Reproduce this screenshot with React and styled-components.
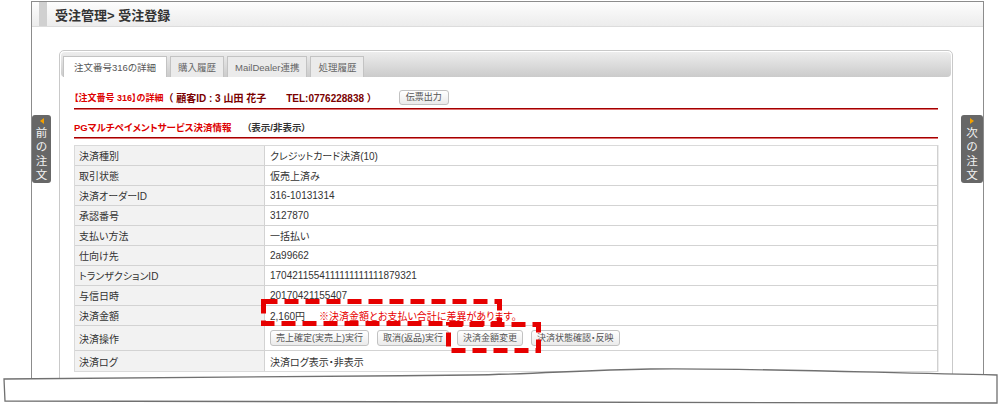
import React from 'react';
import styled, { createGlobalStyle } from 'styled-components';

const GlobalStyle = createGlobalStyle`
  html, body {
    margin: 0;
    padding: 0;
    background: #fff;
  }
  body {
    font-family: "Liberation Sans", "Noto Sans CJK JP", "Noto Sans", sans-serif;
    font-feature-settings: "palt";
    color: #333;
  }
`;

const Page = styled.div`
  position: relative;
  width: 1000px;
  height: 405px;
  overflow: hidden;
  padding: 1px 0 0 31px;
  box-sizing: border-box;
`;

const Frame = styled.div`
  width: 953px;
  height: 420px;
  border: 1px solid #8c8c8c;
  border-bottom: none;
  box-sizing: border-box;
`;

const TitleBar = styled.div`
  display: flex;
  align-items: center;
  height: 24px;
  border-bottom: 1px solid #dcdcdc;
  background: linear-gradient(#fdfdfd, #ececec);
`;

const Accent = styled.span`
  align-self: stretch;
  width: 8px;
  margin-left: 7px;
  background: #d0d0d0;
`;

const Title = styled.h1`
  margin: 0 0 0 8px;
  font-size: 13px;
  font-weight: bold;
  color: #333;
  font-feature-settings: normal;
`;

const Body = styled.div`
  display: flex;
  align-items: flex-start;
  padding-top: 23px;
`;

const SideTab = styled.div`
  width: ${(p) => (p.$side === 'left' ? '19px' : '22px')};
  height: 68px;
  margin-top: 65px;
  box-sizing: border-box;
  padding-top: 3px;
  background: #676767;
  border-radius: 3px;
  color: #f2f2f2;
  display: flex;
  flex-direction: column;
  align-items: center;
  font-family: "Noto Sans CJK JP", sans-serif;
  font-feature-settings: normal;
  font-size: 11.5px;
  line-height: 14px;
`;

const Arrow = styled.span`
  width: 0;
  height: 0;
  margin-bottom: 1px;
  border-top: 3px solid transparent;
  border-bottom: 3px solid transparent;
  ${(p) =>
    p.$side === 'left'
      ? 'border-right: 4px solid #f3a000;'
      : 'border-left: 4px solid #f3a000;'}
`;

const Char = styled.span`
  display: block;
  height: 14px;
`;

const Panel = styled.div`
  width: 894px;
  height: 340px;
  margin: 0 8px;
  box-sizing: border-box;
  border: 1px solid #c9c9c9;
  border-radius: 5px;
  padding: 1px;
`;

const TabBar = styled.div`
  display: flex;
  align-items: flex-end;
  gap: 3px;
  height: 25px;
  padding-left: 2px;
  background: linear-gradient(#ededed, #cbcbcb);
  border-radius: 4px;
`;

const Tab = styled.div`
  height: 21px;
  box-sizing: border-box;
  padding: 0 ${(p) => (p.$active ? 10 : 7)}px;
  display: flex;
  align-items: center;
  border: 1px solid #c3c3c3;
  border-bottom: none;
  background: ${(p) => (p.$active ? '#fff' : '#ebebeb')};
  color: ${(p) => (p.$active ? '#555' : '#666')};
  font-size: 9.5px;
  white-space: nowrap;
`;

const Content = styled.div`
  padding: 0 13px;
`;

const RuleRow = styled.div`
  display: flex;
  align-items: center;
  height: ${(p) => p.$h}px;
  margin-top: ${(p) => p.$mt}px;
  border-bottom: 1px solid #a30000;
  box-shadow: 0 1px 0 #e07070;
  font-weight: bold;
  white-space: nowrap;
`;

const RedText = styled.span`
  color: #dd0000;
  font-size: ${(p) => p.$size}px;
`;

const DarkText = styled.span`
  color: ${(p) => p.$color || '#333'};
  font-size: ${(p) => p.$size}px;
  margin-left: ${(p) => p.$ml || 0}px;
  font-feature-settings: ${(p) => (p.$wide ? 'normal' : '"palt"')};
`;

const Btn = styled.button`
  height: ${(p) => p.$h || 16}px;
  margin-left: ${(p) => p.$ml || 0}px;
  padding: 0 ${(p) => p.$px || 5}px;
  box-sizing: border-box;
  border: 1px solid #c2c2c2;
  border-radius: 3px;
  background: linear-gradient(#ffffff, #ebebeb);
  color: #555;
  font-family: inherit;
  font-feature-settings: "palt";
  font-size: 9px;
  font-weight: normal;
  line-height: 1;
  white-space: nowrap;
  position: relative;
`;

const Table = styled.div`
  margin-top: 7px;
  border: 1px solid #dadada;
  border-right-color: #d0d0d0;
  box-shadow: 1px 0 0 #ececec;
`;

const Row = styled.div`
  display: grid;
  grid-template-columns: 190px 1fr;
  height: ${(p) => p.$h || 20}px;
  box-sizing: border-box;
  border-bottom: 1px solid #d3d3d3;
  font-size: 10px;
  &:last-child {
    border-bottom: none;
  }
`;

const Label = styled.div`
  display: flex;
  align-items: center;
  padding-left: 4px;
  background: #f2f2f2;
  border-right: 1px solid #d3d3d3;
  color: #333;
`;

const Value = styled.div`
  position: relative;
  display: flex;
  align-items: center;
  gap: ${(p) => p.$gap || 0}px;
  padding-left: 5px;
  color: #333;
  white-space: nowrap;
`;

const Warn = styled.span`
  color: #e80000;
  margin-left: 14px;
`;

const Mark = styled.svg`
  position: absolute;
  left: ${(p) => p.$l}px;
  top: ${(p) => p.$t}px;
  overflow: visible;
  pointer-events: none;
  z-index: 2;
`;

const Tear = styled.svg`
  position: absolute;
  left: 0;
  top: 364px;
  z-index: 5;
`;

const DashBox = ({ l, t, w, h }) => (
  <Mark $l={l} $t={t} width={w} height={h}>
    <rect
      x="2.5"
      y="2.5"
      width={w - 5}
      height={h - 5}
      fill="none"
      stroke="#e60000"
      strokeWidth="5"
      strokeDasharray="14 7"
    />
  </Mark>
);

const SideNav = ({ side, label }) => (
  <SideTab $side={side}>
    <Arrow $side={side} />
    {label.split('').map((c, i) => (
      <Char key={i}>{c}</Char>
    ))}
  </SideTab>
);

const rows = [
  ['決済種別', 'クレジットカード決済(10)'],
  ['取引状態', '仮売上済み'],
  ['決済オーダーID', '316-10131314'],
  ['承認番号', '3127870'],
  ['支払い方法', '一括払い'],
  ['仕向け先', '2a99662'],
  ['トランザクションID', '1704211554111111111111879321'],
  ['与信日時', '20170421155407'],
];

const tabs = ['注文番号316の詳細', '購入履歴', 'MailDealer連携', '処理履歴'];

export default function App() {
  return (
    <>
      <GlobalStyle />
      <Page>
        <Frame>
          <TitleBar>
            <Accent />
            <Title>受注管理&gt; 受注登録</Title>
          </TitleBar>
          <Body>
            <SideNav side="left" label="前の注文" />
            <Panel>
              <TabBar>
                {tabs.map((t, i) => (
                  <Tab key={t} $active={i === 0}>
                    {t}
                  </Tab>
                ))}
              </TabBar>
              <Content>
                <RuleRow $h={22} $mt={9}>
                  <RedText $size={9}>【注文番号 316】の詳細</RedText>
                  <DarkText $size={10} $color="#7a0000" $ml={0} $wide>
                    （ 顧客ID : 3 山田 花子　　TEL:0776228838 ）
                  </DarkText>
                  <Btn $h={15} $ml={22} $px={6}>伝票出力</Btn>
                </RuleRow>
                <RuleRow $h={20} $mt={8}>
                  <RedText $size={9.5}>PGマルチペイメントサービス決済情報</RedText>
                  <DarkText $size={9.5} $ml={15}>（表示/非表示）</DarkText>
                </RuleRow>
                <Table>
                  {rows.map(([k, v]) => (
                    <Row key={k}>
                      <Label>{k}</Label>
                      <Value>{v}</Value>
                    </Row>
                  ))}
                  <Row>
                    <Label>決済金額</Label>
                    <Value>
                      2,160円<Warn>※決済金額とお支払い合計に差異があります。</Warn>
                      <DashBox l={-4} t={-7} w={241} h={27} />
                    </Value>
                  </Row>
                  <Row $h={25}>
                    <Label>決済操作</Label>
                    <Value $gap={8}>
                      <Btn>売上確定(実売上)実行</Btn>
                      <Btn>取消(返品)実行</Btn>
                      <Btn>
                        決済金額変更
                        <DashBox l={-12} t={-9} w={95} h={31} />
                      </Btn>
                      <Btn>決済状態確認・反映</Btn>
                    </Value>
                  </Row>
                  <Row>
                    <Label>決済ログ</Label>
                    <Value>決済ログ表示・非表示</Value>
                  </Row>
                </Table>
              </Content>
            </Panel>
            <SideNav side="right" label="次の注文" />
          </Body>
        </Frame>
        <Tear width="1000" height="41" viewBox="0 0 1000 41">
          <rect x="0" y="30" width="1000" height="11" fill="#fff" />
          <path
            d="M4 15 C 120 14, 300 13, 470 11 C 540 10, 580 6, 650 5 C 750 4, 850 8, 997 11 L 997 39 C 700 38, 300 38, 5 37 Z"
            fill="#fff"
            stroke="#707070"
            strokeWidth="1.3"
          />
        </Tear>
      </Page>
    </>
  );
}
